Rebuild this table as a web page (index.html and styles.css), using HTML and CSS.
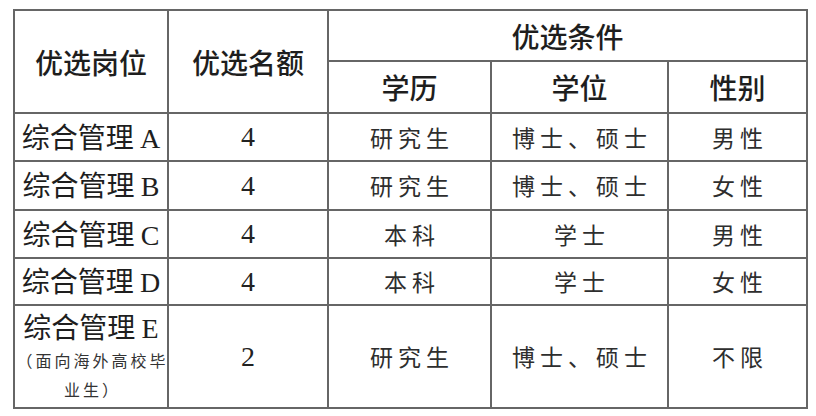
FILE: index.html
```html
<!DOCTYPE html>
<html lang="zh-CN">
<head>
<meta charset="utf-8">
<title>优选岗位</title>
<link rel="stylesheet" href="styles.css">
</head>
<body>
<table class="grid">
  <colgroup>
    <col class="c1"><col class="c2"><col class="c3"><col class="c4"><col class="c5">
  </colgroup>
  <thead>
    <tr class="h1">
      <th rowspan="2">优选岗位</th>
      <th rowspan="2">优选名额</th>
      <th colspan="3">优选条件</th>
    </tr>
    <tr class="h2">
      <th>学历</th>
      <th>学位</th>
      <th>性别</th>
    </tr>
  </thead>
  <tbody>
    <tr class="r48">
      <td class="post">综合管理 <span class="latin">A</span></td>
      <td class="num">4</td>
      <td class="cond">研究生</td>
      <td class="cond">博士、硕士</td>
      <td class="cond">男性</td>
    </tr>
    <tr class="r49">
      <td class="post">综合管理 <span class="latin">B</span></td>
      <td class="num">4</td>
      <td class="cond">研究生</td>
      <td class="cond">博士、硕士</td>
      <td class="cond">女性</td>
    </tr>
    <tr class="r48">
      <td class="post">综合管理 <span class="latin">C</span></td>
      <td class="num">4</td>
      <td class="cond">本科</td>
      <td class="cond">学士</td>
      <td class="cond">男性</td>
    </tr>
    <tr class="r47">
      <td class="post">综合管理 <span class="latin">D</span></td>
      <td class="num">4</td>
      <td class="cond">本科</td>
      <td class="cond">学士</td>
      <td class="cond">女性</td>
    </tr>
    <tr class="r103">
      <td class="post">综合管理 <span class="latin">E</span><div class="note">（面向海外高校毕<br>业生）</div></td>
      <td class="num">2</td>
      <td class="cond">研究生</td>
      <td class="cond">博士、硕士</td>
      <td class="cond">不限</td>
    </tr>
  </tbody>
</table>
</body>
</html>
```
FILE: styles.css
```css
html, body {
  margin: 0;
  background: #ffffff;
}
body {
  padding: 9px 0 0 13px;
  font-family: "Noto Sans CJK SC", "Noto Sans", sans-serif;
  color: #222;
}
.grid {
  border-collapse: collapse;
  table-layout: fixed;
  width: 795px;
}
.grid th, .grid td {
  border: 2px solid #666;
  text-align: center;
  vertical-align: middle;
  padding: 0;
}
.c1 { width: 154px; }
.c2 { width: 160px; }
.c3 { width: 163px; }
.c4 { width: 177px; }
.c5 { width: 139px; }

.grid th {
  font-size: 28px;
  font-weight: 500;
  color: #1e1e1e;
  line-height: 1;
}
.h1 { height: 51px; }
.h2 { height: 52px; }
.r47 { height: 47px; }
.r48 { height: 48px; }
.r49 { height: 49px; }
.r103 { height: 103px; }

.grid td.post {
  font-size: 28px;
  color: #1e1e1e;
  line-height: 34px;
  white-space: nowrap;
  overflow: visible;
}
.post .latin {
  font-family: "Liberation Serif", serif;
  font-size: 28px;
}
.note {
  font-size: 16px;
  letter-spacing: 3px;
  line-height: 29px;
  color: #333;
  text-align: center;
  margin-right: -3px;
}
.num {
  font-family: "Liberation Serif", serif;
  font-size: 28px;
  color: #222;
}
.grid td.cond {
  font-size: 23px;
  font-weight: 400;
  letter-spacing: 5px;
  color: #2e2e2e;
  line-height: 1;
  padding-left: 5px;
}
```
